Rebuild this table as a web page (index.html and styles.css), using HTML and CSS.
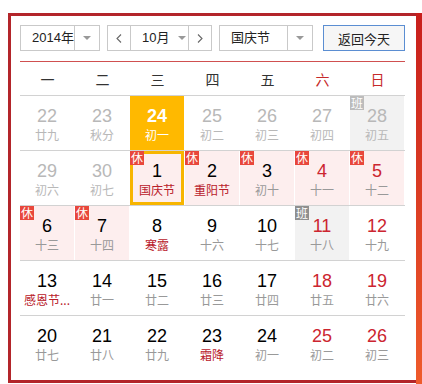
FILE: index.html
```html
<!DOCTYPE html>
<html lang="zh-CN">
<head>
<meta charset="utf-8">
<title>万年历</title>
<link rel="stylesheet" href="styles.css">
</head>
<body>
<div class="wrap">
  <div class="panel">
    <div class="toolbar">
      <div class="select year"><span class="val">2014年</span><span class="arr"><i class="tri"></i></span></div>
      <div class="month">
        <span class="nav prev"><svg width="6" height="9" viewBox="0 0 6 9"><path d="M5 0.5 L1 4.5 L5 8.5" fill="none" stroke="#666" stroke-width="1.1"/></svg></span>
        <span class="mval"><span class="mtext">10月</span><i class="tri"></i></span>
        <span class="nav next"><svg width="6" height="9" viewBox="0 0 6 9"><path d="M1 0.5 L5 4.5 L1 8.5" fill="none" stroke="#666" stroke-width="1.1"/></svg></span>
      </div>
      <div class="select hol"><span class="val">国庆节</span><span class="arr"><i class="tri"></i></span></div>
      <button class="back">返回今天</button>
    </div>
    <div class="weekhead">
      <span>一</span><span>二</span><span>三</span><span>四</span><span>五</span><span class="we">六</span><span class="we">日</span>
    </div>
    <div class="row">
      <div class="c o"><span class="n">22</span><span class="l">廿九</span></div>
      <div class="c o"><span class="n">23</span><span class="l">秋分</span></div>
      <div class="c sel"><span class="n">24</span><span class="l">初一</span></div>
      <div class="c o"><span class="n">25</span><span class="l">初二</span></div>
      <div class="c o"><span class="n">26</span><span class="l">初三</span></div>
      <div class="c o"><span class="n">27</span><span class="l">初四</span></div>
      <div class="c o work"><b class="badge ban light">班</b><span class="n">28</span><span class="l">初五</span></div>
    </div>
    <div class="row">
      <div class="c o"><span class="n">29</span><span class="l">初六</span></div>
      <div class="c o"><span class="n">30</span><span class="l">初七</span></div>
      <div class="c rest cur"><b class="badge xiu">休</b><span class="n">1</span><span class="l fest">国庆节</span></div>
      <div class="c rest"><b class="badge xiu">休</b><span class="n">2</span><span class="l fest">重阳节</span></div>
      <div class="c rest"><b class="badge xiu">休</b><span class="n">3</span><span class="l">初十</span></div>
      <div class="c rest red"><b class="badge xiu">休</b><span class="n">4</span><span class="l">十一</span></div>
      <div class="c rest red"><b class="badge xiu">休</b><span class="n">5</span><span class="l">十二</span></div>
    </div>
    <div class="row">
      <div class="c rest"><b class="badge xiu">休</b><span class="n">6</span><span class="l">十三</span></div>
      <div class="c rest"><b class="badge xiu">休</b><span class="n">7</span><span class="l">十四</span></div>
      <div class="c"><span class="n">8</span><span class="l fest">寒露</span></div>
      <div class="c"><span class="n">9</span><span class="l">十六</span></div>
      <div class="c"><span class="n">10</span><span class="l">十七</span></div>
      <div class="c work red"><b class="badge ban">班</b><span class="n">11</span><span class="l">十八</span></div>
      <div class="c red"><span class="n">12</span><span class="l">十九</span></div>
    </div>
    <div class="row">
      <div class="c"><span class="n">13</span><span class="l fest">感恩节...</span></div>
      <div class="c"><span class="n">14</span><span class="l">廿一</span></div>
      <div class="c"><span class="n">15</span><span class="l">廿二</span></div>
      <div class="c"><span class="n">16</span><span class="l">廿三</span></div>
      <div class="c"><span class="n">17</span><span class="l">廿四</span></div>
      <div class="c red"><span class="n">18</span><span class="l">廿五</span></div>
      <div class="c red"><span class="n">19</span><span class="l">廿六</span></div>
    </div>
    <div class="row">
      <div class="c"><span class="n">20</span><span class="l">廿七</span></div>
      <div class="c"><span class="n">21</span><span class="l">廿八</span></div>
      <div class="c"><span class="n">22</span><span class="l">廿九</span></div>
      <div class="c"><span class="n">23</span><span class="l fest">霜降</span></div>
      <div class="c"><span class="n">24</span><span class="l">初一</span></div>
      <div class="c red"><span class="n">25</span><span class="l">初二</span></div>
      <div class="c red"><span class="n">26</span><span class="l">初三</span></div>
    </div>
  </div>
  <div class="edge"></div>
</div>
</body>
</html>
```
FILE: styles.css
```css
html, body {
  margin: 0;
  height: 384px;
  overflow: hidden;
  background: #fff;
}
body {
  padding: 13px 0 0 8px;
  box-sizing: border-box;
  font-family: "Liberation Sans", "Noto Sans CJK SC", sans-serif;
  color: #000;
}
.wrap {
  display: flex;
  align-items: flex-start;
}
.panel {
  width: 408px;
  height: 370px;
  box-sizing: border-box;
  border: 3px solid #b3252a;
  border-right: 0;
  padding: 9px 11px 0 9px;
}
.edge {
  width: 6px;
  height: 371px;
  background: linear-gradient(to bottom, #c81f1c, #ef5b2b);
}

/* toolbar */
.toolbar {
  display: flex;
  gap: 7px;
  height: 26px;
}
.select, .month {
  display: flex;
  height: 26px;
  box-sizing: border-box;
  border: 1px solid #c9c9c9;
  font-family: "Liberation Sans", "Noto Sans CJK SC", sans-serif;
  font-size: 13px;
  color: #222;
  background: #fff;
}
.year { width: 80px; }
.hol { width: 94px; }
.month { width: 105px; }
.val {
  flex: 1;
  line-height: 24px;
  padding-left: 11px;
}
.arr {
  width: 24px;
  border-left: 1px solid #c9c9c9;
  display: flex;
  align-items: center;
  justify-content: center;
}
.tri {
  display: block;
  width: 0;
  height: 0;
  border-left: 4px solid transparent;
  border-right: 4px solid transparent;
  border-top: 4px solid #999;
}
.nav {
  width: 22px;
  display: flex;
  align-items: center;
  justify-content: center;
}
.prev { border-right: 1px solid #c9c9c9; }
.next { border-left: 1px solid #c9c9c9; }
.mval {
  flex: 1;
  display: flex;
  align-items: center;
  padding-left: 11px;
  gap: 9px;
}
.mtext { line-height: 24px; }
.back {
  margin-left: auto;
  width: 82px;
  height: 26px;
  box-sizing: border-box;
  border: 1px solid #5b8ed2;
  background: #f6f6f6;
  font-family: "Noto Sans CJK SC", sans-serif;
  font-size: 13px;
  color: #222;
  padding: 0;
}

/* week header */
.weekhead {
  margin-top: 10px;
  border-top: 1px solid #d05050;
  height: 33px;
  display: grid;
  grid-template-columns: repeat(7, 55px);
  align-items: center;
  text-align: center;
  font-family: "Noto Sans CJK SC", sans-serif;
  font-size: 14px;
  color: #333;
}
.weekhead .we { color: #c62a2a; }

/* day grid */
.row {
  border-top: 1px solid #d2d2d2;
  display: grid;
  grid-template-columns: repeat(7, 55px);
}
.c {
  position: relative;
  height: 54px;
  box-sizing: border-box;
  border-right: 1px solid #fff;
  padding-top: 9px;
  text-align: center;
}
.n {
  display: block;
  font-size: 18px;
  line-height: 22px;
  color: #000;
}
.l {
  display: block;
  font-family: "Noto Sans CJK SC", sans-serif;
  font-size: 12px;
  line-height: 16px;
  color: #999;
  white-space: nowrap;
}
.l.fest { color: #b9202b; }
.red .n { color: #cc2530; }
.o .n, .o .l { color: #b8b8b8; }
.sel { background: #ffb900; }
.sel .n { color: #fff; font-weight: bold; }
.sel .l { color: #fff; }
.rest { background: #fdeeee; }
.work { background: #f2f2f2; }
.cur { box-shadow: inset 0 0 0 3px #f7b500; }
.badge {
  position: absolute;
  top: 0;
  left: 0;
  width: 14px;
  height: 14px;
  font-family: "Noto Sans CJK SC", sans-serif;
  font-size: 12px;
  line-height: 14px;
  font-weight: normal;
  color: #fff;
  text-align: center;
}
.xiu { background: #e8473b; }
.ban { background: #8f8f8f; }
.ban.light { background: #bcbcbc; }
```
